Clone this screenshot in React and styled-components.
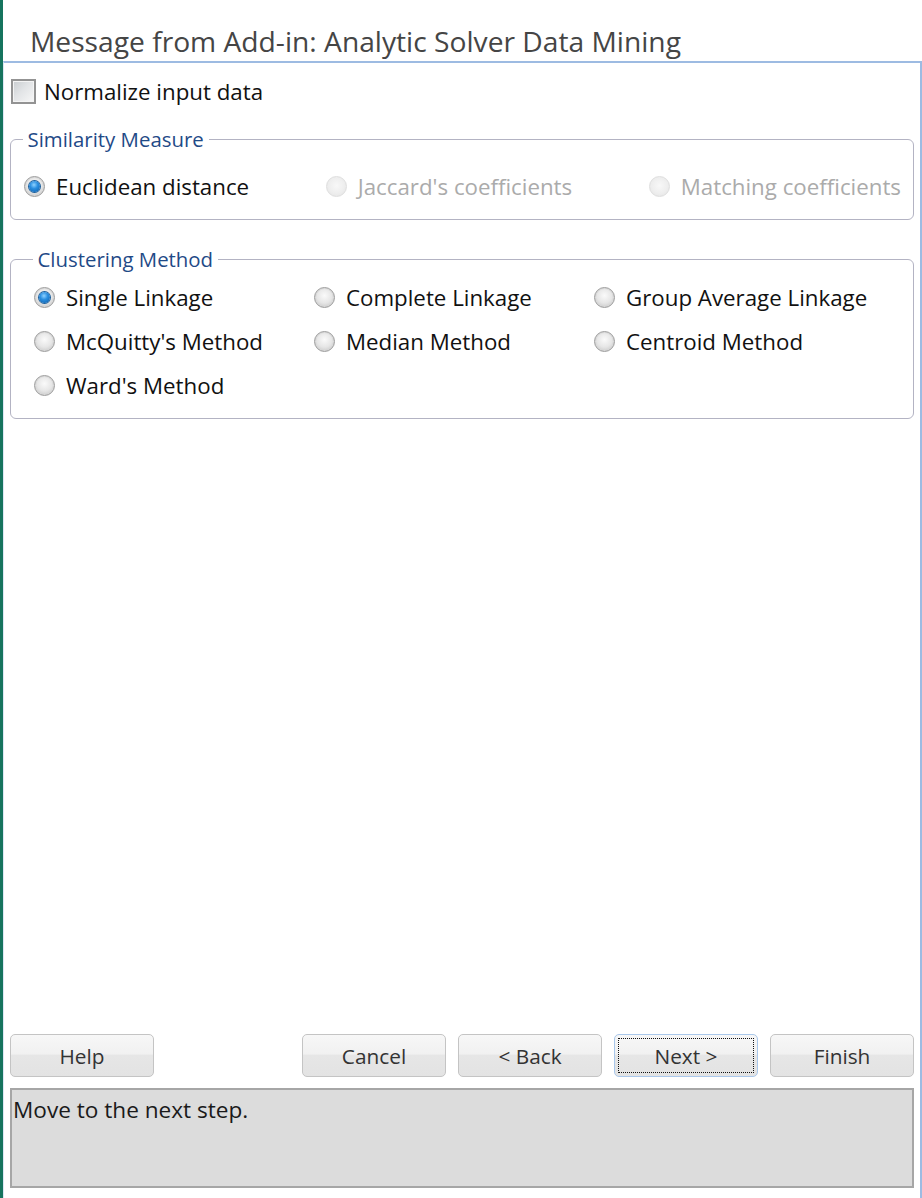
import React from "react";
import styled, { createGlobalStyle, css } from "styled-components";

const GlobalStyle = createGlobalStyle`
  html, body { margin: 0; padding: 0; background: #ffffff; }
  body { font-family: "Open Sans", "Noto Sans", "DejaVu Sans", sans-serif; }
  * { box-sizing: border-box; }
`;

const FONT = `"Open Sans", "Noto Sans", "DejaVu Sans", sans-serif`;

const Window = styled.div`
  display: flex;
  height: 1198px;
  width: 922px;
  border-left: 3px solid #16745e;
  overflow: hidden;
`;

const Main = styled.div`
  flex: 1;
  display: flex;
  flex-direction: column;
  min-width: 0;
`;

const Title = styled.div`
  height: 61px;
  flex: none;
  display: flex;
  align-items: flex-end;
  padding: 0 0 1px 27px;
  font-family: ${FONT};
  font-size: 28.2px;
  line-height: 38px;
  color: #454545;
  white-space: nowrap;
`;

const Panel = styled.div`
  flex: 1;
  display: flex;
  flex-direction: column;
  border-top: 2px solid #9dbbe2;
  border-right: 2px solid #9dbbe2;
  border-left: 1px solid #dce7f4;
  padding: 13px 6px 10px 6px;
`;

const CheckRow = styled.label`
  display: flex;
  align-items: center;
  gap: 8px;
  height: 30px;
  padding-left: 1px;
  font-family: ${FONT};
  font-size: 22.3px;
  color: #111;
`;

const CheckBox = styled.span`
  width: 25px;
  height: 25px;
  flex: none;
  border: 2px solid #939393;
  box-shadow: inset 0 0 0 1px #f4f4f4;
  background: linear-gradient(135deg, #c9cdd0 0%, #e2e4e6 45%, #f7f7f7 100%);
`;

const Group = styled.fieldset`
  margin: ${(p) => p.$mt}px 0 0 0;
  border: 1.5px solid #b3b3c3;
  border-radius: 6px;
  padding: ${(p) => p.$pad};
  min-width: 0;
`;

const Legend = styled.legend`
  margin-left: ${(p) => p.$indent}px;
  padding: 0 5px;
  font-family: ${FONT};
  font-size: 20.4px;
  line-height: 24px;
  color: #1f4a87;
`;

const SpreadRow = styled.div`
  display: flex;
  justify-content: space-between;
  align-items: center;
`;

const Grid = styled.div`
  display: grid;
  grid-template-columns: 280px 280px 1fr;
  row-gap: 14px;
`;

const RadioOption = styled.label`
  display: flex;
  align-items: center;
  gap: 11px;
  height: 30px;
  font-family: ${FONT};
  font-size: 22.3px;
  white-space: nowrap;
  color: ${(p) => (p.$disabled ? "#ababab" : "#111111")};
`;

const RadioDot = styled.span`
  position: relative;
  width: 21px;
  height: 21px;
  flex: none;
  border-radius: 50%;
  ${(p) =>
    p.$disabled
      ? css`
          border: 1px solid #dedede;
          background: radial-gradient(circle at 50% 45%, #f8f8f8 0%, #eeeeee 55%, #e2e2e2 100%);
        `
      : css`
          border: 1px solid #9c9c9c;
          background: radial-gradient(circle at 50% 40%, #fafafa 0%, #e6e6e6 50%, #bcbcbc 100%);
          box-shadow: inset 0 0 0 1px #d8d8d8;
        `}
  ${(p) =>
    p.$checked &&
    css`
      &::after {
        content: "";
        position: absolute;
        left: 4px;
        top: 4px;
        width: 11px;
        height: 11px;
        border-radius: 50%;
        background: radial-gradient(circle at 45% 35%, #8fd2ff 0%, #2b8fe0 40%, #0a5aa6 100%);
        box-shadow: 0 0 0 1px #1b5f9c;
      }
    `}
`;

const Spacer = styled.div`
  flex: 1;
`;

const ButtonRow = styled.div`
  display: flex;
  gap: 12px;
  align-items: center;
`;

const Button = styled.button`
  position: relative;
  width: 144px;
  height: 43px;
  margin-left: ${(p) => (p.$pushRight ? "auto" : "0")};
  border: 1px solid ${(p) => (p.$focused ? "#a9c7ea" : "#c4c4c4")};
  border-radius: 5px;
  background: linear-gradient(
    to bottom,
    #f7f7f7 0%,
    #f1f1f1 46%,
    #e6e6e6 50%,
    #e3e3e3 100%
  );
  font-family: ${FONT};
  font-size: 20.8px;
  color: #333333;
  padding: 0;
  cursor: default;
  ${(p) =>
    p.$focused &&
    css`
      &::after {
        content: "";
        position: absolute;
        inset: 3px;
        border: 1px dotted #111;
      }
    `}
`;

const StatusBox = styled.div`
  margin-top: 11px;
  height: 100px;
  border: 2px solid #a6a6a6;
  background: #dcdcdc;
  padding: 4px 0 0 1px;
  font-family: ${FONT};
  font-size: 22.6px;
  color: #1a1a1a;
`;

function Radio({ label, checked, disabled }) {
  return (
    <RadioOption $disabled={disabled}>
      <RadioDot $checked={checked} $disabled={disabled} />
      {label}
    </RadioOption>
  );
}

export default function App() {
  const methods = [
    { label: "Single Linkage", checked: true },
    { label: "Complete Linkage" },
    { label: "Group Average Linkage" },
    { label: "McQuitty's Method" },
    { label: "Median Method" },
    { label: "Centroid Method" },
    { label: "Ward's Method" },
  ];
  return (
    <>
      <GlobalStyle />
      <Window>
        <Main>
          <Title>Message from Add-in: Analytic Solver Data Mining</Title>
          <Panel>
            <CheckRow>
              <CheckBox />
              Normalize input data
            </CheckRow>
            <Group $mt={21} $pad="20px 12px 18px 13px">
              <Legend $indent={-1.5}>Similarity Measure</Legend>
              <SpreadRow>
                <Radio label="Euclidean distance" checked />
                <Radio label="Jaccard's coefficients" disabled />
                <Radio label="Matching coefficients" disabled />
              </SpreadRow>
            </Group>
            <Group $mt={27} $pad="11px 12px 18px 23px">
              <Legend $indent={-1.5}>Clustering Method</Legend>
              <Grid>
                {methods.map((m) => (
                  <Radio key={m.label} label={m.label} checked={m.checked} />
                ))}
              </Grid>
            </Group>
            <Spacer />
            <ButtonRow>
              <Button>Help</Button>
              <Button $pushRight>Cancel</Button>
              <Button>&lt; Back</Button>
              <Button $focused>Next &gt;</Button>
              <Button>Finish</Button>
            </ButtonRow>
            <StatusBox>Move to the next step.</StatusBox>
          </Panel>
        </Main>
      </Window>
    </>
  );
}
